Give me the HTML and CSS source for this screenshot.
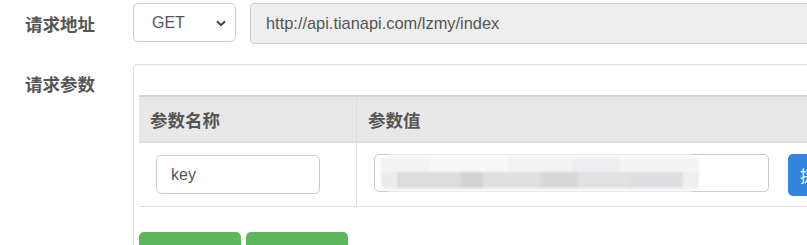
FILE: index.html
```html
<!DOCTYPE html>
<html lang="zh">
<head>
<meta charset="utf-8">
<link rel="stylesheet" href="styles.css">
</head>
<body>
<div class="page">
  <div class="form-row row-url">
    <div class="label">请求地址</div>
    <div class="controls">
      <div class="select">
        <span class="select-text">GET</span>
        <svg class="chev" width="10" height="7" viewBox="0 0 10 7"><path d="M1 1.2 L5 5.2 L9 1.2" fill="none" stroke="#444" stroke-width="2"/></svg>
      </div>
      <div class="url-input">http://api.tianapi.com/lzmy/index</div>
    </div>
  </div>
  <div class="form-row row-params">
    <div class="label label-params">请求参数</div>
    <div class="panel">
      <table class="ptable">
        <thead>
          <tr><th class="c1">参数名称</th><th class="c2">参数值</th></tr>
        </thead>
        <tbody>
          <tr>
            <td class="c1"><div class="field key-field">key</div></td>
            <td class="c2">
              <div class="value-cell">
                <div class="field value-field">
                  <div class="mosaic">
                    <div class="mos-top"></div>
                    <div class="mos-bot"></div>
                  </div>
                </div>
                <div class="btn-blue">提</div>
              </div>
            </td>
          </tr>
        </tbody>
      </table>
      <div class="actions">
        <div class="btn-green"></div>
        <div class="btn-green"></div>
      </div>
    </div>
  </div>
</div>
</body>
</html>
```

FILE: styles.css
```css
html, body {
  margin: 0;
  padding: 0;
  background: #fff;
  overflow: hidden;
}
body {
  width: 807px;
  height: 245px;
  font-family: "Liberation Sans", Arial, "Noto Sans CJK SC", sans-serif;
  color: #555;
}
.page {
  padding-top: 3px;
}
.form-row {
  display: flex;
  align-items: flex-start;
}
.label {
  width: 108px;
  padding-left: 25px;
  font-family: "Noto Sans CJK SC", sans-serif;
  font-weight: 700;
  font-size: 17.5px;
  color: #555;
  line-height: 41px;
  flex-shrink: 0;
}
.controls {
  display: flex;
  gap: 14px;
  flex-shrink: 0;
}
.select {
  box-sizing: border-box;
  width: 103px;
  height: 39px;
  border: 1px solid #ccc;
  border-radius: 5px;
  display: flex;
  align-items: center;
  justify-content: space-between;
  padding: 0 9px 0 18px;
  font-size: 16px;
  color: #555;
  background: #fff;
}
.chev { display: block; margin-top: 1px; }
.url-input {
  box-sizing: border-box;
  width: 600px;
  height: 41px;
  border: 1px solid #ccc;
  border-radius: 4px;
  background: #eee;
  padding-left: 15px;
  line-height: 39px;
  font-size: 16.4px;
  color: #555;
}
.row-params {
  margin-top: 20px;
}
.label-params {
  line-height: 40px;
}
.panel {
  box-sizing: border-box;
  width: 700px;
  height: 200px;
  flex-shrink: 0;
  border: 1px solid #ddd;
  border-radius: 4px;
  padding: 30px 0 0 5px;
}
.ptable {
  border-collapse: collapse;
  width: 690px;
  table-layout: fixed;
}
.ptable th {
  background: #e8e8e8;
  border-top: 2px solid #d3d3d3;
  border-bottom: 2px solid #dcdcdc;
  height: 44px;
  padding: 0 0 0 11px;
  text-align: left;
  font-family: "Noto Sans CJK SC", sans-serif;
  font-weight: 700;
  font-size: 17.5px;
  color: #555;
}
.ptable th.c1, .ptable td.c1 {
  width: 206px;
  border-right: 1px solid #ddd;
}
.ptable td {
  height: 63px;
  border-bottom: 1px solid #ddd;
  padding: 0 0 0 17px;
  vertical-align: middle;
}
.field {
  box-sizing: border-box;
  height: 39px;
  border: 1px solid #ccc;
  border-radius: 5px;
  background: #fff;
}
.key-field {
  width: 164px;
  padding-left: 14px;
  line-height: 37px;
  font-size: 16px;
  color: #555;
}
.value-cell {
  display: flex;
  align-items: flex-start;
  gap: 19px;
  margin-top: 1px;
}
.value-field {
  width: 395px;
  height: 38px;
  flex-shrink: 0;
  display: flex;
  align-items: center;
  padding-left: 6px;
}
.mosaic {
  width: 318px;
  height: 38px;
  margin-top: -1px;
  display: flex;
  flex-direction: column;
  justify-content: center;
  background: #f9f9f9;
  border-radius: 12px;
  filter: blur(1.2px);
}
.mos-top {
  height: 14px;
  background: linear-gradient(90deg, #f3f3f3 0 15%, #f8f8f8 15% 40%, #f3f3f3 40% 60%, #eeeef0 60% 75%, #f4f4f4 75% 100%);
}
.mos-bot {
  height: 16px;
  background: linear-gradient(90deg, #ececec 0 5%, #dcdcdf 5% 25%, #d3d2d5 25% 32%, #e0e0e2 32% 50%, #d8d7da 50% 62%, #e2e1e4 62% 78%, #dfdee2 78% 95%, #efefef 95% 100%);
}
.btn-blue {
  box-sizing: border-box;
  width: 60px;
  height: 42px;
  background: #3386de;
  border-radius: 5px;
  color: #fff;
  font-family: "Noto Sans CJK SC", sans-serif;
  font-size: 16px;
  line-height: 42px;
  padding-left: 12px;
  flex-shrink: 0;
}
.actions {
  display: flex;
  gap: 5px;
  margin-top: 25px;
}
.btn-green {
  width: 102px;
  height: 40px;
  background: #5cb85c;
  border-radius: 5px;
}
```
